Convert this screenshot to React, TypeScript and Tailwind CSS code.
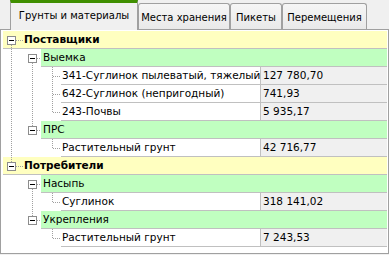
import React from 'react';

type Item = [string, string];
type Sub = { name: string; items: Item[] };
type Group = { name: string; subs: Sub[] };

const groups: Group[] = [
    {
        name: 'Поставщики',
        subs: [
            {
                name: 'Выемка',
                items: [
                    ['341-Суглинок пылеватый, тяжелый', '127 780,70'],
                    ['642-Суглинок (непригодный)', '741,93'],
                    ['243-Почвы', '5 935,17'],
                ],
            },
            { name: 'ПРС', items: [['Растительный грунт', '42 716,77']] },
        ],
    },
    {
        name: 'Потребители',
        subs: [
            { name: 'Насыпь', items: [['Суглинок', '318 141,02']] },
            { name: 'Укрепления', items: [['Растительный грунт', '7 243,53']] },
        ],
    },
];

const DOT = '#a0a0a0';

// minus box of the tree, 9x9
function Box({ x, y }: { x: number; y: number }) {
    return (
        <g shapeRendering="crispEdges">
            <rect x={x + 0.5} y={y + 0.5} width={8} height={8} fill="#fff" stroke="#8c8c8c" />
            <line x1={x + 2} y1={y + 4.5} x2={x + 7} y2={y + 4.5} stroke="#000" />
        </g>
    );
}

function VLine({ x, y1, y2 }: { x: number; y1: number; y2: number }) {
    return <line x1={x + 0.5} y1={y1} x2={x + 0.5} y2={y2} stroke={DOT} strokeDasharray="1 1" shapeRendering="crispEdges" />;
}

function HLine({ x1, x2, y }: { x1: number; x2: number; y: number }) {
    return <line x1={x1} y1={y + 0.5} x2={x2} y2={y + 0.5} stroke={DOT} strokeDasharray="1 1" shapeRendering="crispEdges" />;
}

export default function App() {
    return (
        <div
            className="flex h-[255px] w-[389px] flex-col overflow-hidden bg-[#f0f0f0] text-[10.5px] text-black"
            style={{ fontFamily: '"DejaVu Sans", Verdana, sans-serif' }}
        >
            {/* tabs */}
            <div className="flex h-[29px] items-end whitespace-nowrap pl-[10px] text-[10px]">
                <div className="relative z-10 -mb-px flex h-[30px] w-[128px] items-center justify-center border-x border-[#a0a0a0] border-t-[3px] border-t-[#3f8f00] bg-[#f0f0f0] pb-[2px]">
                    Грунты и материалы
                </div>
                <div className="flex h-[26px] w-[92px] items-center justify-center rounded-t-[3px] border border-b-0 border-[#a0a0a0] bg-gradient-to-b from-[#f6f6f6] to-[#e9e9e9] pt-px">
                    Места хранения
                </div>
                <div className="flex h-[26px] w-[52px] items-center justify-center rounded-t-[3px] border border-b-0 border-[#a0a0a0] bg-gradient-to-b from-[#f6f6f6] to-[#e9e9e9] pt-px">
                    Пикеты
                </div>
                <div className="flex h-[26px] w-[85px] items-center justify-center rounded-t-[3px] border border-b-0 border-[#a0a0a0] bg-gradient-to-b from-[#f6f6f6] to-[#e9e9e9] pt-px">
                    Перемещения
                </div>
            </div>

            {/* tree panel */}
            <div className="flex h-[225px] flex-col border border-[#a0a0a0] bg-white pl-[2px] pr-px pt-px">
                {groups.map((g, gi) => {
                    const gNext = gi < groups.length - 1;
                    const gPrev = gi > 0;
                    return (
                        <React.Fragment key={g.name}>
                            {/* level 1 */}
                            <div className="flex h-[18px] border-b border-[#c0c0c0] bg-[#ffffc0]">
                                <svg width={21} height={17} className="shrink-0">
                                    {gPrev && <VLine x={8} y1={0} y2={5} />}
                                    {gNext && <VLine x={8} y1={14} y2={18} />}
                                    <Box x={4} y={5} />
                                    <HLine x1={13} x2={20} y={9} />
                                </svg>
                                <span className="pt-[1px] font-bold">{g.name}</span>
                            </div>

                            {g.subs.map((s, si) => {
                                const sNext = si < g.subs.length - 1;
                                const sPrev = si > 0;
                                return (
                                    <React.Fragment key={s.name}>
                                        {/* level 2 */}
                                        <div className="flex h-[18px]">
                                            <svg width={38} height={18} className="shrink-0">
                                                {gNext && <VLine x={8} y1={0} y2={18} />}
                                                {sPrev && <VLine x={29} y1={0} y2={5} />}
                                                {sNext && <VLine x={29} y1={14} y2={18} />}
                                                <Box x={25} y={5} />
                                                <HLine x1={34} x2={38} y={9} />
                                            </svg>
                                            <div className="flex-1 border-b border-[#c0c0c0] bg-[#c0ffc0] pl-[2px] pt-[1px]">
                                                {s.name}
                                            </div>
                                        </div>

                                        {s.items.map(([name, value], ii) => {
                                            const last = ii === s.items.length - 1;
                                            return (
                                                <div key={name} className="flex h-[18px]">
                                                    <svg width={58} height={18} className="shrink-0">
                                                        {gNext && <VLine x={8} y1={0} y2={18} />}
                                                        {sNext && <VLine x={29} y1={0} y2={18} />}
                                                        <VLine x={49} y1={0} y2={last ? 9 : 18} />
                                                        <HLine x1={50} x2={58} y={9} />
                                                    </svg>
                                                    <div className="flex flex-1 border-b border-[#c0c0c0]">
                                                        <div className="w-[200px] whitespace-nowrap border-r border-[#c0c0c0] pl-px pt-[1px]">
                                                            {name}
                                                        </div>
                                                        <div className="flex-1 bg-[#f0f0f0] pl-[2px] pt-[1px]">{value}</div>
                                                    </div>
                                                </div>
                                            );
                                        })}
                                    </React.Fragment>
                                );
                            })}
                        </React.Fragment>
                    );
                })}
            </div>
        </div>
    );
}
